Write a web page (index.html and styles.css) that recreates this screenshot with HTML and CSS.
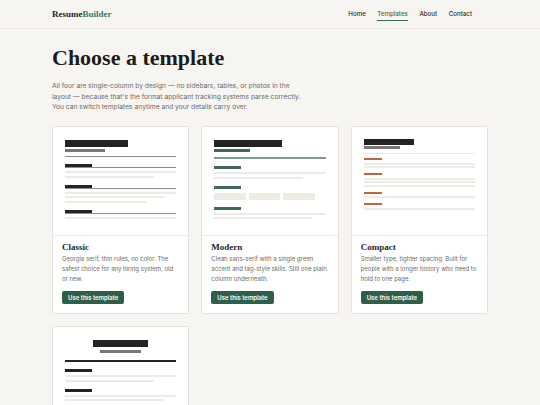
FILE: index.html
```html
<!DOCTYPE html>
<html lang="en">
<head>
<meta charset="utf-8">
<title>Choose a template — ResumeBuilder</title>
<link rel="stylesheet" href="styles.css">
</head>
<body>
<header class="site-header">
  <div class="header-inner">
    <a class="logo" href="#">Resume<span class="logo-accent">Builder</span></a>
    <nav class="nav">
      <a href="#" class="nav-link">Home</a>
      <a href="#" class="nav-link active">Templates</a>
      <a href="#" class="nav-link">About</a>
      <a href="#" class="nav-link">Contact</a>
    </nav>
  </div>
</header>

<main class="main">
  <h1 class="title">Choose a template</h1>
  <p class="intro">All four are single-column by design — no sidebars, tables, or photos in the layout — because that's the format applicant tracking systems parse correctly. You can switch templates anytime and your details carry over.</p>

  <div class="grid">
    <!-- Classic -->
    <article class="card">
      <div class="preview pv-classic">
        <div class="c-name"></div>
        <div class="c-sub"></div>
        <div class="c-rule"></div>
        <div class="c-sec"><div class="c-bar"></div><div class="c-secrule"></div></div>
        <div class="ln"></div>
        <div class="ln w80"></div>
        <div class="c-sec"><div class="c-bar"></div><div class="c-secrule"></div></div>
        <div class="ln"></div>
        <div class="ln w89"></div>
        <div class="ln w73"></div>
        <div class="c-sec"><div class="c-bar"></div><div class="c-secrule"></div></div>
        <div class="ln"></div>
      </div>
      <div class="card-body">
        <h2 class="card-title">Classic</h2>
        <p class="card-desc">Georgia serif, thin rules, no color. The safest choice for any hiring system, old or new.</p>
        <a href="#" class="btn">Use this template</a>
      </div>
    </article>

    <!-- Modern -->
    <article class="card">
      <div class="preview pv-modern">
        <div class="m-name"></div>
        <div class="m-sub"></div>
        <div class="m-rule"></div>
        <div class="m-bar"></div>
        <div class="ln"></div>
        <div class="ln w80"></div>
        <div class="m-bar"></div>
        <div class="m-tags"><span class="m-tag"></span><span class="m-tag"></span><span class="m-tag"></span></div>
        <div class="m-bar"></div>
        <div class="ln"></div>
        <div class="ln w88"></div>
      </div>
      <div class="card-body">
        <h2 class="card-title">Modern</h2>
        <p class="card-desc">Clean sans-serif with a single green accent and tag-style skills. Still one plain column underneath.</p>
        <a href="#" class="btn">Use this template</a>
      </div>
    </article>

    <!-- Compact -->
    <article class="card">
      <div class="preview pv-compact">
        <div class="k-name"></div>
        <div class="k-sub"></div>
        <div class="k-rule"></div>
        <div class="k-bar"></div>
        <div class="kl"></div>
        <div class="kl w80"></div>
        <div class="k-bar"></div>
        <div class="kl"></div>
        <div class="kl w89"></div>
        <div class="kl w72"></div>
        <div class="k-bar"></div>
        <div class="kl"></div>
        <div class="k-bar"></div>
        <div class="kl w72"></div>
      </div>
      <div class="card-body">
        <h2 class="card-title">Compact</h2>
        <p class="card-desc">Smaller type, tighter spacing. Built for people with a longer history who need to hold to one page.</p>
        <a href="#" class="btn">Use this template</a>
      </div>
    </article>

    <!-- Executive -->
    <article class="card">
      <div class="preview pv-exec">
        <div class="e-name"></div>
        <div class="e-sub"></div>
        <div class="e-rule"></div>
        <div class="e-bar"></div>
        <div class="ln"></div>
        <div class="ln w80"></div>
        <div class="e-bar"></div>
        <div class="ln"></div>
        <div class="ln w88"></div>
      </div>
      <div class="card-body">
        <h2 class="card-title">Executive</h2>
        <p class="card-desc">Centered header and heavier rules for senior roles. Same single column underneath.</p>
        <a href="#" class="btn">Use this template</a>
      </div>
    </article>
  </div>
</main>
</body>
</html>
```

FILE: styles.css
```css
* { box-sizing: border-box; }

html, body {
  margin: 0;
  padding: 0;
  background: #f7f5f1;
  color: #1f1f1f;
  font-family: Inter, "Liberation Sans", sans-serif;
}

a { text-decoration: none; color: inherit; }

/* Header */
.site-header {
  height: 29px;
  border-bottom: 1px solid #ebe8e2;
  background: #f7f5f1;
}
.header-inner {
  width: 436px;
  margin: 0 auto;
  height: 100%;
  display: flex;
  align-items: center;
  justify-content: space-between;
  padding-right: 16px;
}
.logo {
  font-family: "Liberation Serif", serif;
  font-weight: 700;
  font-size: 9px;
  color: #1f1f1f;
}
.logo-accent { color: #3b7a5f; }

.nav {
  display: flex;
  gap: 11.5px;
  height: 100%;
  align-items: center;
}
.nav-link {
  font-size: 6.2px;
  font-weight: 500;
  color: #2a2a2a;
  position: relative;
  line-height: 1;
}
.nav-link.active { color: #3b6e58; }
.nav-link.active::after {
  content: "";
  position: absolute;
  left: 0;
  right: 0;
  bottom: -4px;
  height: 1px;
  background: #3b6e58;
}

/* Main */
.main {
  width: 436px;
  margin: 0 auto;
  padding-top: 15px;
}
.title {
  font-family: "Liberation Serif", serif;
  font-weight: 700;
  font-size: 22px;
  line-height: 28px;
  margin: 0;
  color: #1c1c1c;
}
.intro {
  margin: 9px 0 0;
  max-width: 252px;
  font-size: 6.7px;
  line-height: 10.7px;
  color: #6b6a68;
}

.grid {
  margin-top: 13px;
  display: grid;
  grid-template-columns: repeat(3, 1fr);
  gap: 12px;
}

.card {
  background: #fff;
  border: 1px solid #e7e3dc;
  border-radius: 2px;
}

/* Previews */
.preview {
  height: 109px;
  border-bottom: 1px solid #efece7;
  padding: 13px 12px 0 12px;
  display: flex;
  flex-direction: column;
  align-items: flex-start;
}
.ln {
  height: 2px;
  width: 100%;
  background: #eeeae4;
  margin-top: 2.5px;
  flex: none;
}
.w80 { width: 80%; }
.w88 { width: 88%; }
.w89 { width: 89%; }
.w73 { width: 73%; }
.w72 { width: 72%; }

/* Classic */
.c-name { width: 63px; height: 7px; background: #222325; flex: none; }
.c-sub { width: 40px; height: 3px; background: #7b7874; margin-top: 2px; flex: none; }
.c-rule { width: 100%; height: 1px; background: #8f8c88; margin-top: 4px; flex: none; }
.c-sec { width: 100%; margin-top: 7px; flex: none; }
.c-bar { width: 27px; height: 3px; background: #222325; }
.c-secrule { width: 100%; height: 1px; background: #8f8c88; }
.pv-classic .c-sec + .ln { margin-top: 3px; }

/* Modern */
.m-name { width: 68px; height: 7px; background: #222325; flex: none; }
.m-sub { width: 36px; height: 3px; background: #3d6b57; margin-top: 2px; flex: none; }
.m-rule { width: 100%; height: 2px; background: #7a9a8b; margin-top: 5px; flex: none; }
.m-bar { width: 27px; height: 3px; background: #3d6b57; margin-top: 7px; flex: none; }
.pv-modern .m-bar + .ln { margin-top: 3px; }
.m-tags {
  display: flex;
  gap: 3px;
  margin-top: 4px;
  flex: none;
}
.m-tag {
  width: 31.5px;
  height: 7px;
  background: #efebe4;
  border-radius: 1px;
}

/* Compact */
.pv-compact { padding-top: 12px; }
.k-name { width: 50px; height: 6px; background: #222325; flex: none; }
.k-sub { width: 36px; height: 3px; background: #7b7874; margin-top: 1px; flex: none; }
.k-rule { width: 100%; height: 1px; background: #eeeae4; margin-top: 4px; flex: none; }
.k-bar { width: 18px; height: 2px; background: #c4633f; margin-top: 5px; flex: none; }
.pv-compact .k-rule + .k-bar { margin-top: 4px; }
.kl {
  width: 100%;
  height: 2px;
  background: #eeeae4;
  margin-top: 1.5px;
  flex: none;
}
.pv-compact .k-bar + .kl { margin-top: 2.5px; }

/* Executive */
.pv-exec { align-items: center; }
.e-name { width: 55px; height: 7px; background: #222325; flex: none; }
.e-sub { width: 41px; height: 3px; background: #7b7874; margin-top: 3px; flex: none; }
.e-rule { width: 100%; height: 2px; background: #222325; margin-top: 7px; flex: none; }
.e-bar { width: 27px; height: 3px; background: #222325; margin-top: 7px; align-self: flex-start; flex: none; }
.pv-exec .e-bar + .ln { margin-top: 3px; }
.pv-exec .ln { align-self: flex-start; }

/* Card body */
.card-body {
  padding: 6px 9px 9px;
}
.card-title {
  font-family: "Liberation Serif", serif;
  font-weight: 700;
  font-size: 9px;
  line-height: 11px;
  margin: 0;
  color: #1f1f1f;
}
.card-desc {
  margin: 1px 0 0;
  font-size: 6px;
  line-height: 10px;
  color: #6d6a66;
}
.btn {
  display: inline-block;
  margin-top: 6px;
  background: #2f5e4a;
  color: #fff;
  font-size: 6px;
  font-weight: 600;
  line-height: 13px;
  height: 13px;
  padding: 0 6px;
  border-radius: 2px;
}
```
